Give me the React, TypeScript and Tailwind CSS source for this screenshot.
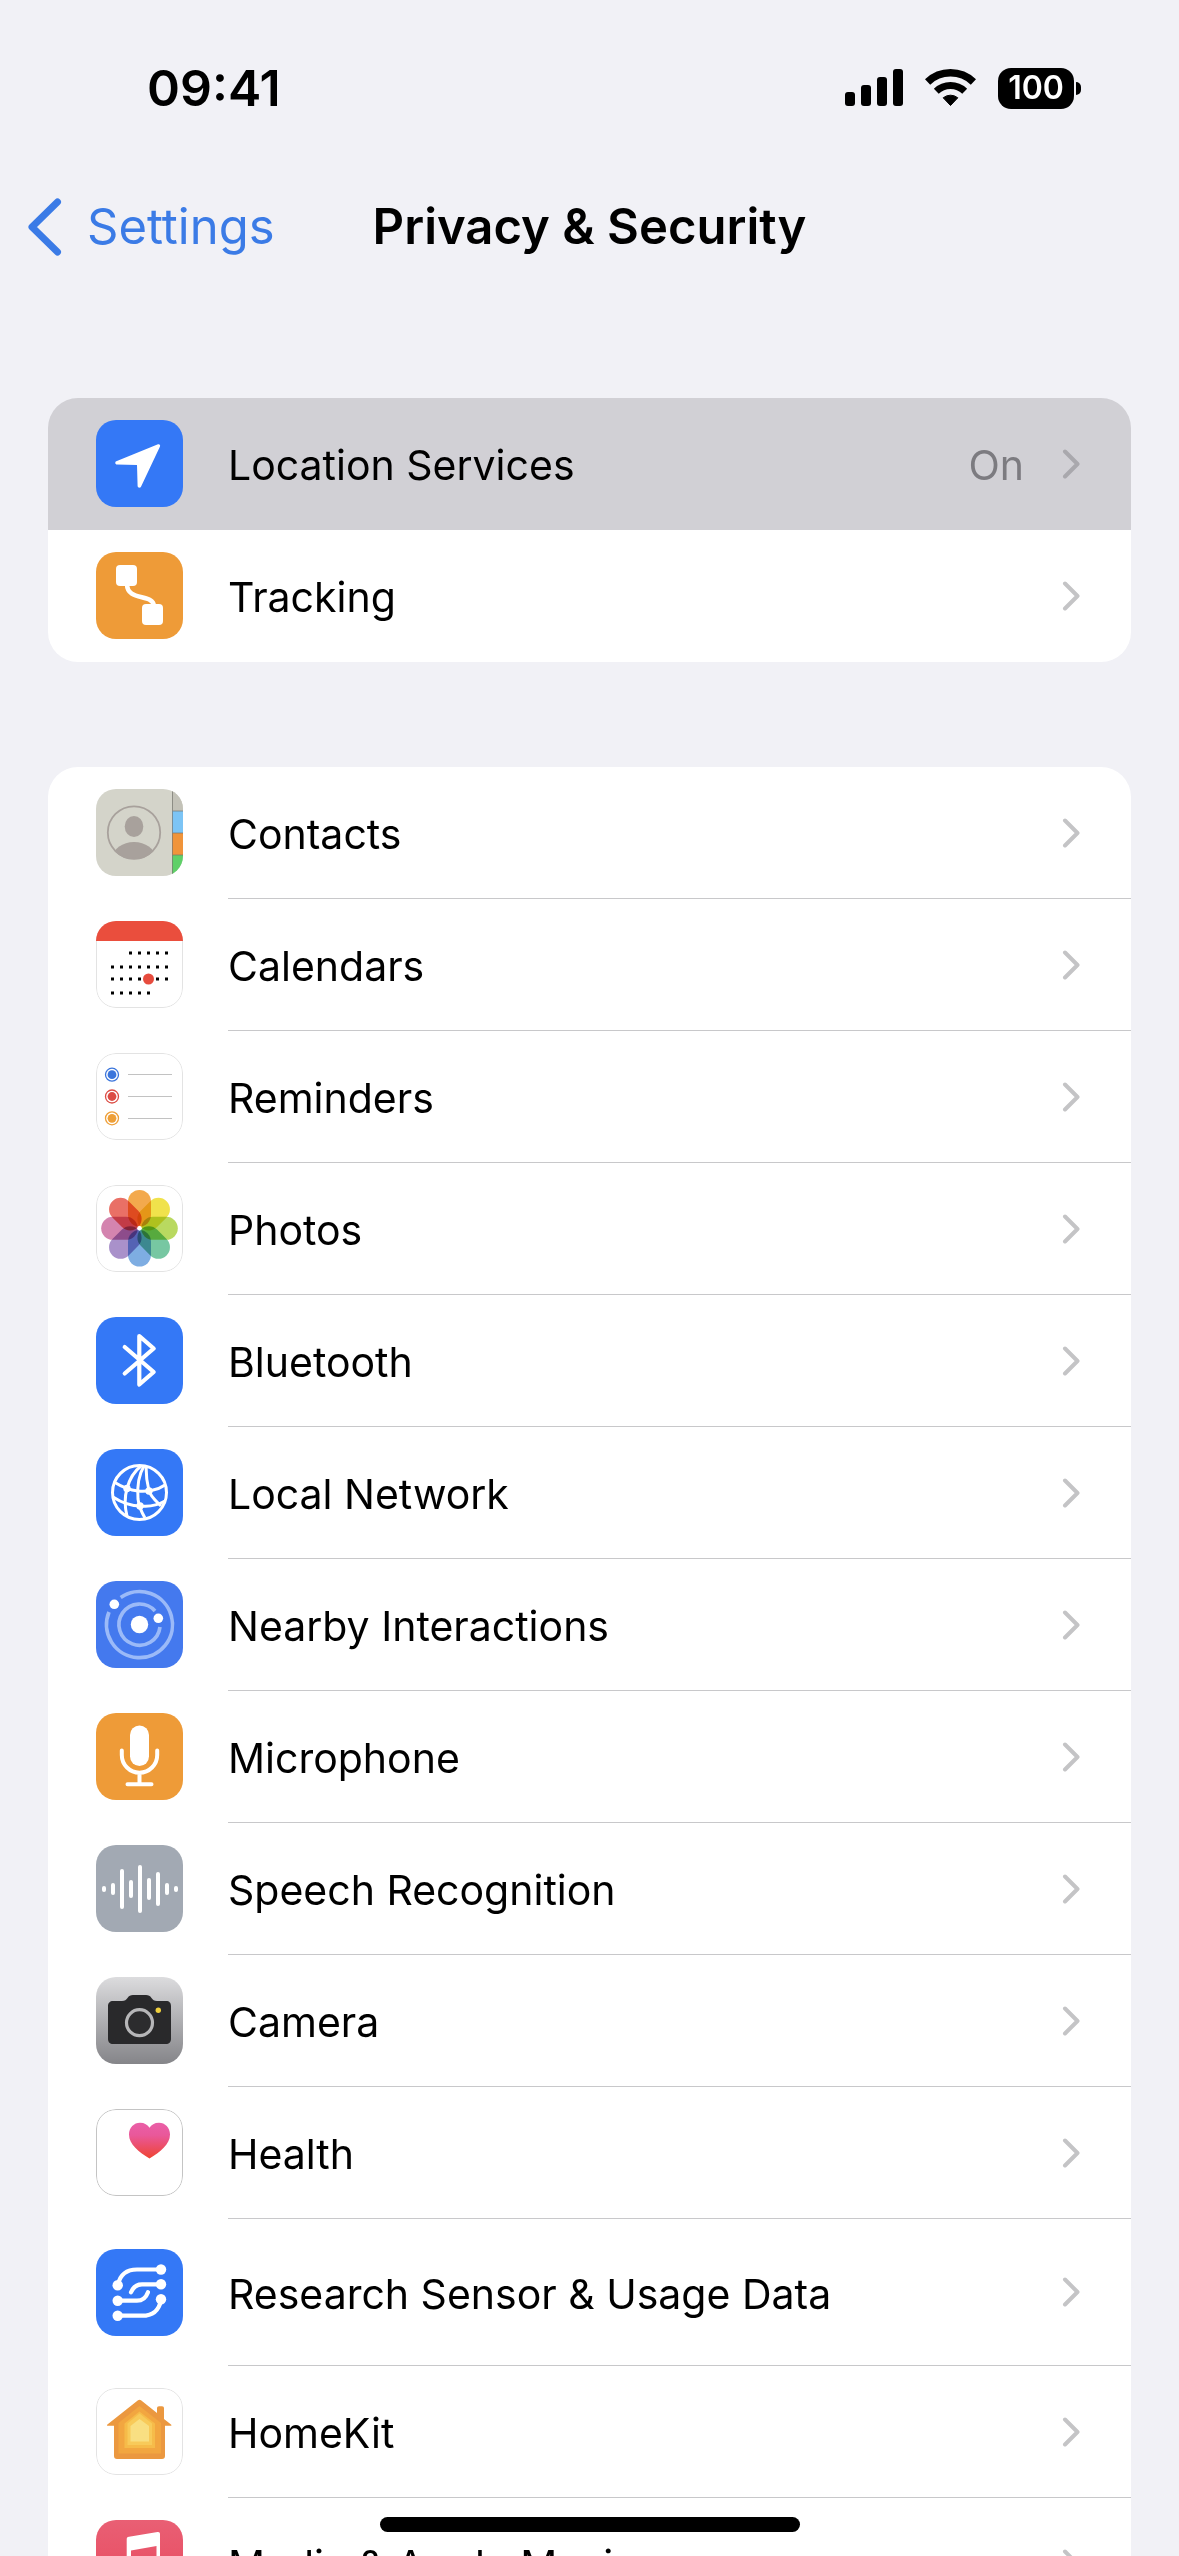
import type { ReactNode } from "react";

const CONTACT_TABS = ["#c3c2b8", "#7cc4f5", "#f0943a", "#5fd068"];
const CALENDAR_ROWS = [
  { y: 32, from: 2, to: 6 },
  { y: 46, from: 0, to: 6 },
  { y: 58, from: 0, to: 6 },
  { y: 72, from: 0, to: 4 },
];
const PETALS = ["#f3a33f", "#efe03e", "#b4d654", "#6dc39b", "#74a7e0", "#a389c6", "#d17ba9", "#e8655a"];
const WAVE = [1, 4, 18, 7, 22, 9, 15, 4, 1];

function Tile({ className, children }: { className: string; children: ReactNode }) {
  return (
    <svg viewBox="0 0 87 87" aria-hidden="true" className={`block size-[87px] rounded-[20px] ${className}`}>
      {children}
    </svg>
  );
}

function TileBorder({ color = "#e3e3e3" }: { color?: string }) {
  return <rect x="0.5" y="0.5" width="86" height="86" rx="19.5" fill="none" stroke={color} />;
}

const LocationIcon = () => (
  <Tile className="bg-[#3478f6]">
    <path
      d="M62 24.3 20.3 41.3c-1.6.8-1.2 3.2.6 3.3L41 45l.6 21c.2 2 2.7 2.3 3.5.5L64 26.4c.6-1.5-.6-2.7-2-2.1z"
      fill="#fff"
    />
  </Tile>
);

const TrackingIcon = () => (
  <Tile className="bg-[#ee9b38]">
    <rect x="20" y="13" width="21" height="21" rx="4" fill="#fff" />
    <rect x="46" y="52" width="21" height="21" rx="4" fill="#fff" />
    <path d="M31 32c0 18 26 9 27 22" fill="none" stroke="#fff" strokeWidth="4.5" />
  </Tile>
);

const ContactsIcon = () => (
  <Tile className="bg-[#d4d4ca]">
    <defs>
      <clipPath id="contact-face">
        <circle cx="38" cy="43.5" r="27" />
      </clipPath>
    </defs>
    {CONTACT_TABS.map((c, i) => (
      <rect key={c} x="76" y={i * 22} width="11" height="22" fill={c} />
    ))}
    <path d="M76.5 0v87M76 22h11M76 44h11M76 66h11" stroke="#77776f" strokeWidth="1" opacity=".7" />
    <g clipPath="url(#contact-face)" fill="#a8a19c">
      <ellipse cx="38" cy="37.5" rx="9.3" ry="10.5" />
      <ellipse cx="38" cy="68" rx="21" ry="15" />
    </g>
    <circle cx="38" cy="43.5" r="26.2" fill="none" stroke="#a8a19c" strokeWidth="1.8" />
  </Tile>
);

const CalendarIcon = () => (
  <Tile className="bg-white">
    <TileBorder />
    <rect width="87" height="20" fill="#ea4e3d" />
    {CALENDAR_ROWS.map((row) =>
      Array.from({ length: row.to - row.from + 1 }, (_, i) => (
        <rect key={`${row.y}-${i}`} x={15 + (row.from + i) * 9} y={row.y - 1.5} width="3" height="3" fill="#000" />
      )),
    )}
    <circle cx="52.5" cy="58" r="5.5" fill="#e74c3e" />
  </Tile>
);

const RemindersIcon = () => (
  <Tile className="bg-white">
    <TileBorder />
    {["#3c76dc", "#dc4c44", "#ee9f38"].map((c, i) => (
      <g key={c}>
        <circle cx="16" cy={21.7 + i * 21.8} r="6.5" fill="none" stroke={c} strokeWidth="1.3" />
        <circle cx="16" cy={21.7 + i * 21.8} r="4.4" fill={c} />
        <path d={`M32 ${21.5 + i * 22}h44`} stroke="#c2c2c2" strokeWidth="1" />
      </g>
    ))}
  </Tile>
);

const PhotosIcon = () => (
  <Tile className="bg-white">
    <TileBorder />
    <g className="isolate">
      {PETALS.map((c, i) => (
        <rect
          key={c}
          x="32"
          y="5"
          width="23"
          height="36.5"
          rx="11.5"
          fill={c}
          opacity=".93"
          transform={`rotate(${i * 45} 43.5 43.3)`}
          className="mix-blend-multiply"
        />
      ))}
    </g>
    <circle cx="43.5" cy="43.3" r="2.2" fill="#fff" />
  </Tile>
);

const BluetoothIcon = () => (
  <Tile className="bg-[#3478f6]">
    <path
      d="M28.7 30 57.7 55 43.3 67.5V19L57.7 31.5 28.7 56.5"
      fill="none"
      stroke="#fff"
      strokeWidth="4.2"
      strokeLinecap="round"
      strokeLinejoin="round"
    />
  </Tile>
);

const NetworkIcon = () => (
  <Tile className="bg-[#3478f6]">
    <g fill="none" stroke="#fff" strokeWidth="3">
      <circle cx="43.5" cy="43.5" r="27" />
      <path d="M45 17C36 24 33 32 31 39.5 28 50 29 59 31 67" />
      <path d="M48 17C42 27 41 38 42 50c1 8 4 14 7 19" />
      <path d="M50 17c0 10 1 17 3 25 2 6 7 10 12 15" />
      <path d="M18 33c8 5 15 8 24 9s20-1 27-6" />
      <path d="M17 48c9 6 18 9 28 9 9 1 17-1 24-5" />
    </g>
    <g fill="#fff">
      <circle cx="31" cy="39.5" r="3.7" />
      <circle cx="53" cy="42" r="3.7" />
      <circle cx="44" cy="57" r="3.7" />
    </g>
  </Tile>
);

const NearbyIcon = () => (
  <Tile className="bg-[#4479ee]">
    <g fill="none" stroke="#9bbaf8" strokeWidth="3.7">
      <path d="M24.7 16.5A33 33 0 1 1 13 31" />
      <path d="M59 30A20.6 20.6 0 1 0 64 46" />
    </g>
    <g fill="#fff">
      <circle cx="43.5" cy="43.5" r="8.7" />
      <circle cx="18.3" cy="23.3" r="4.8" />
      <circle cx="62.3" cy="37.3" r="4.8" />
    </g>
  </Tile>
);

const MicrophoneIcon = () => (
  <Tile className="bg-[#ee9b38]">
    <rect x="34" y="12.5" width="19" height="40.5" rx="9.5" fill="#fff" />
    <path
      d="M25.8 37.5V42a17.7 17.7 0 0 0 35.4 0V37.5M43.5 60v11M31.5 71.3h24"
      fill="none"
      stroke="#fff"
      strokeWidth="4"
      strokeLinecap="round"
    />
  </Tile>
);

const SpeechIcon = () => (
  <Tile className="bg-[#a2a9b3]">
    {WAVE.map((h, i) => (
      <path key={i} d={`M${8 + i * 9} ${44 - h}v${h * 2}`} stroke="#fff" strokeWidth="4" strokeLinecap="round" />
    ))}
  </Tile>
);

const CameraIcon = () => (
  <Tile className="bg-linear-to-b from-[#dcdcde] to-[#858589]">
    <path
      d="M17 24h9c3 0 4-1 5.5-3 1.5-2.2 3-3 5.500-3h13c2.5 0 4 .8 5.5 3 1.5 2 2.5 3 5.5 3h9c3.5 0 5 2 5 5v33c0 3-2 5-5 5H17c-3 0-5-2-5-5V29c0-3 2-5 5-5z"
      fill="#29292b"
    />
    <circle cx="43.5" cy="45.7" r="13" fill="#2c2c2e" stroke="#b6b6b8" strokeWidth="3.2" />
    <circle cx="62.3" cy="33.3" r="2.7" fill="#f0d03e" />
  </Tile>
);

const HealthIcon = () => (
  <Tile className="bg-white">
    <defs>
      <linearGradient id="heart-fill" x1="0" y1="0" x2="0" y2="1">
        <stop offset="0" stopColor="#ea5fa8" />
        <stop offset=".35" stopColor="#e9589a" />
        <stop offset="1" stopColor="#ef4432" />
      </linearGradient>
    </defs>
    <TileBorder color="#c4c4c4" />
    <path
      d="M53.5 49.5C43 43 33 35.5 33 25.5 33 18.5 38 13.7 44 13.7c4.5 0 7.7 2 9.5 5 1.8-3 5-5 9.5-5 6 0 11 4.8 11 11.8 0 10-10 17.5-20.5 24z"
      fill="url(#heart-fill)"
    />
  </Tile>
);

const ResearchIcon = () => (
  <Tile className="bg-[#3478f6]">
    <g fill="none" stroke="#fff" strokeWidth="4.2" strokeLinecap="round">
      <path d="M65 20.5H41c-12 0-17 6-19 15" />
      <path d="M65 35.3H46c-6 0-9 3-11 8" />
      <path d="M21.7 51.7H41c6 0 9-3 11-8.5" />
      <path d="M21.7 66.7H46c12 0 17-6 19-15.5" />
    </g>
    <g fill="#fff">
      {[
        [65, 20.5],
        [21.7, 36.3],
        [65, 35.3],
        [21.7, 51.7],
        [65, 50.3],
        [21.7, 66.7],
      ].map(([cx, cy]) => (
        <circle key={`${cx}-${cy}`} cx={cx} cy={cy} r="5.2" />
      ))}
    </g>
  </Tile>
);

const HomeIcon = () => (
  <Tile className="bg-white">
    <TileBorder />
    <path
      d="M42 12.3c1-.8 2-.8 3 0L61 25v-4.5c0-1.5.8-2.2 2-2.2h3c1.4 0 2 .7 2 2V31l7 5.5c.8.7.5 1.3-.5 1.3H69V68c0 2-1 3-3 3H21c-2 0-3-1-3-3V37.8h-6c-1.2 0-1.4-.7-.6-1.3z"
      fill="#eb9840"
    />
    <path d="M43.5 18 65 35v30.5H22.5V35z" fill="#f2a640" />
    <path d="M43.5 23.5 59 35.5V60H28.5V35.5z" fill="#f6bb49" />
    <path d="M43.5 25.5 56 35.5V57H31.5V35.5z" fill="#f8ca59" />
    <path d="M43.5 31 53 38v15.5H34.5V38z" fill="#f9df82" />
  </Tile>
);

const MusicIcon = () => (
  <Tile className="bg-linear-to-b from-[#e95f74] to-[#e8435a]">
    <path
      d="M33 16.8 61.5 12c1.6-.3 2.5.5 2.5 2v41c0 6-4 9-9 10-5 .8-8-2-8-5.5 0-4 3-6 7-6.8 5-1 6.5-1.5 6.5-5V26L35 30.5V61c0 6-4 9-9 10-5 .8-8-2-8-5.5 0-4 3-6 7-6.8 4.5-1 5.7-1.5 5.7-5V19.5c0-1.7.6-2.4 2.3-2.7z"
      fill="#fff"
    />
  </Tile>
);

const Chevron = ({ className }: { className: string }) => (
  <svg viewBox="0 0 18 30" aria-hidden="true" className={`h-[30px] w-[18px] shrink-0 ${className}`}>
    <path
      d="M3 2.5 15.5 15 3 27.5"
      fill="none"
      stroke="currentColor"
      strokeWidth="4"
      strokeLinecap="round"
      strokeLinejoin="round"
    />
  </svg>
);

type Item = { label: string; icon: ReactNode; value?: string; pressed?: boolean; tall?: boolean };

function Row({ item, divider }: { item: Item; divider: boolean }) {
  return (
    <li>
      <a href="#" className={`flex gap-[45px] pl-12 ${item.pressed ? "bg-[#d1d0d5]" : "bg-white"}`}>
        <span className={`shrink-0 ${item.tall ? "py-[30px]" : "pt-[22px] pb-[23px]"}`}>{item.icon}</span>
        <span
          className={`flex min-w-0 flex-1 items-center border-b pr-[51px] ${divider ? "border-[#c8c8ca]" : "border-transparent"}`}
        >
          <span className="flex-1 truncate pt-[3px] leading-[52px]">{item.label}</span>
          {item.value && <span className="mr-[38px] pt-[3px] leading-[52px] text-[#7c7b80]">{item.value}</span>}
          <Chevron className={item.pressed ? "text-[#a9a8ad]" : "text-[#c4c4c6]"} />
        </span>
      </a>
    </li>
  );
}

function Group({ items, className }: { items: Item[]; className: string }) {
  return (
    <ul className={`mx-12 overflow-hidden ${className}`}>
      {items.map((item, i) => (
        <Row key={item.label} item={item} divider={!item.pressed && i < items.length - 1} />
      ))}
    </ul>
  );
}

const GENERAL: Item[] = [
  { label: "Location Services", icon: <LocationIcon />, value: "On", pressed: true },
  { label: "Tracking", icon: <TrackingIcon /> },
];

const PERMISSIONS: Item[] = [
  { label: "Contacts", icon: <ContactsIcon /> },
  { label: "Calendars", icon: <CalendarIcon /> },
  { label: "Reminders", icon: <RemindersIcon /> },
  { label: "Photos", icon: <PhotosIcon /> },
  { label: "Bluetooth", icon: <BluetoothIcon /> },
  { label: "Local Network", icon: <NetworkIcon /> },
  { label: "Nearby Interactions", icon: <NearbyIcon /> },
  { label: "Microphone", icon: <MicrophoneIcon /> },
  { label: "Speech Recognition", icon: <SpeechIcon /> },
  { label: "Camera", icon: <CameraIcon /> },
  { label: "Health", icon: <HealthIcon /> },
  { label: "Research Sensor & Usage Data", icon: <ResearchIcon />, tall: true },
  { label: "HomeKit", icon: <HomeIcon /> },
  { label: "Media & Apple Music", icon: <MusicIcon /> },
];

function StatusBar() {
  return (
    <div className="flex items-center justify-between pt-14 pr-[98px] pl-[147px]">
      <time className="text-[50px] leading-[64px] font-semibold">09:41</time>
      <div className="flex items-center gap-[22px]">
        <svg viewBox="0 0 58 38" aria-label="Signal" role="img" className="h-[38px] w-[58px]">
          <rect x="0" y="23" width="10" height="14" rx="3" />
          <rect x="16" y="16" width="10" height="21" rx="3" />
          <rect x="32" y="8" width="10" height="29" rx="3" />
          <rect x="48" y="0" width="10" height="37" rx="3" />
        </svg>
        <svg viewBox="0 0 51 38" aria-label="Wi-Fi" role="img" className="h-[38px] w-[51px]">
          <g fill="none" stroke="#000">
            <path d="M2.600 13A33.200 33.200 0 0 1 48.400 13" strokeWidth="7.500" />
            <path d="M11.300 22.200A20.500 20.500 0 0 1 39.700 22.200" strokeWidth="7" />
          </g>
          <path
            d="M18.200 28.800A11.500 11.500 0 0 1 32.800 28.800L25.500 36.500Z"
            stroke="#000"
            strokeWidth="1"
            strokeLinejoin="round"
          />
        </svg>
        <div className="flex items-center gap-[2px]">
          <span className="flex h-[41px] w-[76px] items-center justify-center rounded-[13px] bg-black text-[32px] leading-none font-semibold text-white">
            100
          </span>
          <span className="h-[13px] w-[5px] rounded-r-full bg-black" />
        </div>
      </div>
    </div>
  );
}

export default function App() {
  return (
    <div className="relative h-screen overflow-hidden bg-[#f1f1f6] font-['Inter','Liberation_Sans',sans-serif] text-[41px] text-black">
      <StatusBar />
      <header className="mt-[74px] grid grid-cols-[1fr_auto_1fr] items-center px-7 text-[49px] leading-[66px]">
        <a href="#" className="flex items-center gap-[25px] text-[#3b7be6]">
          <svg viewBox="0 0 34 58" aria-hidden="true" className="h-[58px] w-[34px] shrink-0">
            <path
              d="M29.500 4 4 29 29.500 54"
              fill="none"
              stroke="currentColor"
              strokeWidth="7"
              strokeLinecap="round"
              strokeLinejoin="round"
            />
          </svg>
          Settings
        </a>
        <h1 className="font-semibold">Privacy &amp; Security</h1>
      </header>
      <main>
        <Group items={GENERAL} className="mt-[138px] rounded-[30px]" />
        <Group items={PERMISSIONS} className="mt-[105px] rounded-[30px]" />
      </main>
      <div className="absolute bottom-6 left-1/2 h-[15px] w-[420px] -translate-x-1/2 rounded-full bg-black" />
    </div>
  );
}
